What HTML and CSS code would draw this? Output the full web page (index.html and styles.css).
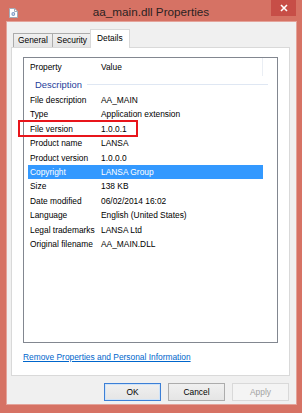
FILE: index.html
```html
<!DOCTYPE html>
<html lang="en">

<head>
    <meta charset="UTF-8">
    <meta name="viewport" content="width=device-width, initial-scale=1.0">
    <title>aa_main.dll Properties</title>
    <link rel="stylesheet" href="styles.css">
</head>

<body>

    <div class="window">
        <!-- Title bar -->
        <div class="titlebar">
            <div class="title-left">
                <svg class="app-icon" width="9" height="10" viewBox="0 0 9 10">
                    <path d="M0.5 0.5h5.3l2.7 2.7v6.3h-8z" fill="#fff" stroke="#a3acb9" />
                    <path d="M5.5 0.5v3h3" fill="none" stroke="#a3acb9" />
                    <circle cx="4.3" cy="6" r="1.9" fill="#7f9cc6" />
                    <circle cx="4.3" cy="6" r="0.7" fill="#fff" />
                </svg>
            </div>
            <div class="title">aa_main.dll Properties</div>
            <div class="title-right">
                <div class="close-btn">
                    <svg width="8" height="8" viewBox="0 0 8 8">
                        <path d="M1 1L7 7M7 1L1 7" stroke="#fff" stroke-width="1.6" />
                    </svg>
                </div>
            </div>
        </div>

        <!-- Client area -->
        <div class="client">
            <div class="tabs">
                <div class="tab">General</div>
                <div class="tab">Security</div>
                <div class="tab active">Details</div>
            </div>

            <div class="panel">
                <div class="list">
                    <div class="list-header">
                        <div class="col-prop">Property</div>
                        <div class="col-value">Value</div>
                    </div>
                    <div class="group">
                        <span>Description</span>
                        <div class="group-line"></div>
                    </div>
                    <div class="row"><div class="name">File description</div><div class="val">AA_MAIN</div></div>
                    <div class="row"><div class="name">Type</div><div class="val">Application extension</div></div>
                    <div class="row marked"><div class="name">File version</div><div class="val">1.0.0.1</div><div class="mark"></div></div>
                    <div class="row"><div class="name">Product name</div><div class="val">LANSA</div></div>
                    <div class="row"><div class="name">Product version</div><div class="val">1.0.0.0</div></div>
                    <div class="row selected"><div class="name">Copyright</div><div class="val">LANSA Group</div></div>
                    <div class="row"><div class="name">Size</div><div class="val">138 KB</div></div>
                    <div class="row"><div class="name">Date modified</div><div class="val">06/02/2014 16:02</div></div>
                    <div class="row"><div class="name">Language</div><div class="val">English (United States)</div></div>
                    <div class="row"><div class="name">Legal trademarks</div><div class="val">LANSA Ltd</div></div>
                    <div class="row"><div class="name">Original filename</div><div class="val">AA_MAIN.DLL</div></div>
                </div>
                <a class="link" href="#">Remove Properties and Personal Information</a>
            </div>

            <div class="buttons">
                <div class="btn default">OK</div>
                <div class="btn">Cancel</div>
                <div class="btn disabled">Apply</div>
            </div>
        </div>
    </div>

</body>

</html>
```

FILE: styles.css
```css
/* Window frame */
body {
    margin: 0;
    font-family: "Liberation Sans", Arial, sans-serif;
    font-size: 8.4px;
    color: #000;
    background-color: #d67264;
}

.window {
    width: 302px;
    height: 413px;
    display: flex;
    flex-direction: column;
}

/* Title bar */
.titlebar {
    height: 22px;
    flex-shrink: 0;
    display: grid;
    grid-template-columns: 1fr auto 1fr;
}

.app-icon {
    display: block;
    margin: 8px 0 0 9px;
}

.title {
    font-size: 11.7px;
    line-height: 22px;
    padding-top: 1px;
    color: #2b2222;
}

.title-right {
    display: flex;
    justify-content: flex-end;
    align-items: flex-start;
}

.close-btn {
    width: 25px;
    height: 16px;
    margin-right: 6px;
    background-color: #c74e47;
    display: flex;
    align-items: center;
    justify-content: center;
}

.close-btn svg {
    display: block;
}

/* Client area */
.client {
    flex: 1;
    margin: 0 6px 9px 7px;
    padding: 7px 6px 3px 4px;
    background-color: #f0f0f0;
    box-shadow: 0 0 0 1px rgba(255, 255, 255, 0.35);
    display: flex;
    flex-direction: column;
}

/* Tabs */
.tabs {
    height: 19px;
    margin-bottom: -1px;
    padding-left: 2px;
    display: flex;
    align-items: flex-end;
    position: relative;
    z-index: 1;
}

.tab {
    height: 14px;
    margin-bottom: 1px;
    padding: 0 4px;
    box-sizing: border-box;
    border: 1px solid #acacac;
    border-bottom: none;
    margin-right: -1px;
    background: linear-gradient(#f0f0f0, #e5e5e5);
    line-height: 13px;
}

.tab.active {
    height: 19px;
    margin: 0 -2px 0 -1px;
    padding: 0 6px;
    border-color: #d9d9d9;
    background: #fff;
    line-height: 17px;
    position: relative;
}

.panel {
    height: 329px;
    box-sizing: border-box;
    padding: 9px 11px 0 11px;
    background-color: #fff;
    border: 1px solid #d9d9d9;
}

/* Details list */
.list {
    height: 286px;
    box-sizing: border-box;
    border: 1px solid #828790;
}

.list-header {
    height: 18px;
    display: flex;
}

.list-header div {
    line-height: 18px;
    box-sizing: border-box;
}

.col-prop {
    width: 72px;
    padding-left: 6px;
}

.col-value {
    width: 167px;
    padding-left: 5px;
    border-right: 1px solid #eaeef4;
}

.group {
    height: 17px;
    padding-left: 11px;
    display: flex;
    align-items: center;
    font-size: 9.4px;
    color: #1e3d9a;
}

.group-line {
    flex: 1;
    height: 1px;
    margin: 0 9px 0 5px;
    background-color: #dfe7f3;
}

.row {
    height: 14.4px;
    line-height: 14.4px;
    margin: 0 14px 0 4px;
    display: flex;
    position: relative;
    white-space: nowrap;
}

.row .name {
    width: 71px;
    padding-left: 2px;
}

.row.selected {
    background-color: #3399ff;
    color: #fff;
}

/* red annotation round the File version row */
.mark {
    position: absolute;
    left: -10px;
    top: -2px;
    width: 120px;
    height: 17px;
    box-sizing: border-box;
    border: 2px solid #e8151b;
}

.link {
    display: block;
    margin-top: 9px;
    line-height: 11px;
    color: #0066cc;
    text-decoration: underline;
}

/* Dialog buttons */
.buttons {
    margin-top: 7px;
    padding-right: 1px;
    display: flex;
    justify-content: flex-end;
    gap: 7px;
}

.btn {
    width: 57px;
    height: 18px;
    box-sizing: border-box;
    border: 1px solid #acacac;
    background: linear-gradient(#f0f0f0, #e5e5e5);
    display: flex;
    align-items: center;
    justify-content: center;
}

.btn.default {
    border-color: #3c7fd6;
    box-shadow: inset 0 0 0 1px #cfe3f8;
}

.btn.disabled {
    color: #a3a3a3;
    border-color: #d9d9d9;
    background: #f4f4f4;
}
```
